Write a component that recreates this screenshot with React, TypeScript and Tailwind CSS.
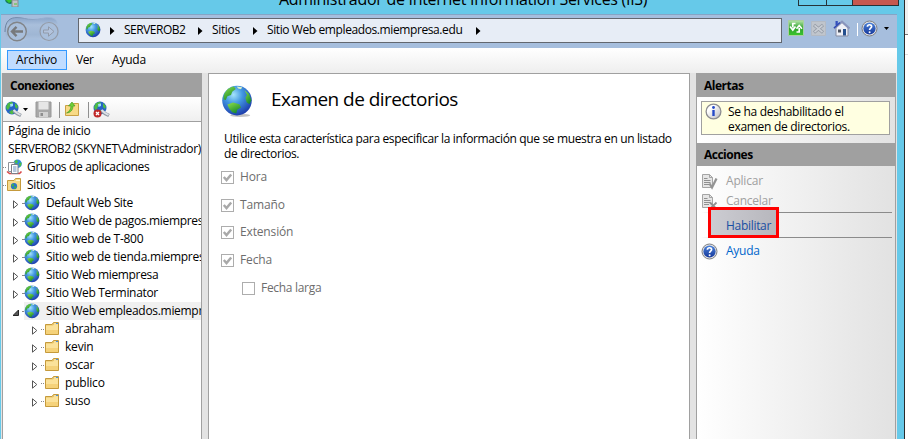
import React from "react";

const Globe = ({ size = 16, shadow = false }: { size?: number; shadow?: boolean }) => (
  <svg width={size} height={size} viewBox="0 0 16 16" className="shrink-0">
    <defs>
      <radialGradient id="sea" cx="0.38" cy="0.3" r="0.75">
        <stop offset="0" stopColor="#a5e4fb" />
        <stop offset="0.4" stopColor="#4398e2" />
        <stop offset="1" stopColor="#1a37a8" />
      </radialGradient>
      <linearGradient id="land" x1="0" y1="0" x2="0.6" y2="1">
        <stop offset="0" stopColor="#8fe04a" />
        <stop offset="1" stopColor="#178a2c" />
      </linearGradient>
    </defs>
    {shadow && <ellipse cx="9.6" cy="15.2" rx="5" ry="0.8" fill="#999" opacity="0.6" />}
    <circle cx="8" cy="7.8" r="7.4" fill="url(#sea)" />
    <path d="M1.3 7.2C1 3.8 3.6 1.2 6.4.8L7.4 2 5.6 3.4 5 5 3.2 5.6 2.4 7.5Z" fill="url(#land)" />
    <path d="M3.2 9.8 6 8.8 9.2 9.6 10 11.2 8.2 12.2 7.6 14.2 5.6 13.6 4 11.6Z" fill="url(#land)" />
    <path d="M11.8 2.6 14 4.4 15.2 7.6 14.2 9.6 12.8 8.6 12.2 6.4 13 5Z" fill="url(#land)" />
    <path d="M7.8.7 10.6 1.1 10 2.1 8.6 1.8Z" fill="#d9f2c8" />
  </svg>
);

const Folder = () => (
  <svg width="16" height="16" viewBox="0 0 16 16" className="shrink-0">
    <path d="M1.5 3.5H8L9.5 1.5H14.5V13.5H1.5Z" fill="#e9c566" stroke="#c59a3c" />
    <path d="M10 3H14" stroke="#fff7d0" />
    <path d="M12 2.5h2" stroke="#4a90d9" />
    <path d="M2 4.5H8.8L10 3.8H14V13H2Z" fill="#fbe29a" />
    <path d="M2 9H14V13H2Z" fill="#f5d27a" />
  </svg>
);

const SitesFolder = () => (
  <svg width="16" height="16" viewBox="0 0 16 16" className="shrink-0">
    <path d="M1.5 3.5H8L9.5 1.5H14.5V13.5H1.5Z" fill="#f5d98a" stroke="#c59a3c" />
    <path d="M10 3.5H14" stroke="#fff7d0" />
    <circle cx="8" cy="9.2" r="3.1" fill="#2b75c8" />
    <path d="M5.5 8 7.5 6.5 8 8.5 6.5 9.8ZM8 10 10 9 10.3 11 8.5 12Z" fill="#43b53b" />
  </svg>
);

const AppPools = () => (
  <svg width="17" height="16" viewBox="0 0 17 16" className="shrink-0">
    <circle cx="11.5" cy="4.8" r="4.3" fill="#2f8ae0" />
    <path d="M8.5 2 11 .8 12 3 10 5ZM13 4 15.6 3.6 15 7 13.5 7.5Z" fill="#4cc043" />
    <path d="M1 12.5 3.5 14.5H13.5L15.5 12.5" fill="none" stroke="#d94848" strokeWidth="1.6" />
    <path d="M2.5 3.5h6v9h-6z" fill="#fff" stroke="#8d9299" />
    <path d="M5.5 5.5h6.5v9H5.5z" fill="#fff" stroke="#7b8088" />
    <path d="M7 8h3.5M7 10h3.5M7 12h3.5" stroke="#6c90bc" />
  </svg>
);

const HelpIcon = () => (
  <svg width="17" height="17" viewBox="0 0 17 17" className="shrink-0">
    <defs>
      <linearGradient id="help" x1="0" y1="0" x2="0" y2="1">
        <stop offset="0" stopColor="#4c83da" />
        <stop offset="1" stopColor="#15379a" />
      </linearGradient>
    </defs>
    <circle cx="8.5" cy="8.5" r="7.5" fill="#e2e2e2" stroke="#7e8085" />
    <circle cx="8.5" cy="8.5" r="6.1" fill="url(#help)" />
    <path d="M6.4 6.7C6.5 4 10.8 4.2 10.6 6.7 10.4 8.2 8.6 8.2 8.6 10" fill="none" stroke="#fff" strokeWidth="1.7" />
    <circle cx="8.6" cy="12.2" r="1" fill="#fff" />
  </svg>
);

const InfoIcon = () => (
  <svg width="17" height="17" viewBox="0 0 17 17" className="shrink-0">
    <defs>
      <linearGradient id="info" x1="0" y1="0" x2="1" y2="1">
        <stop offset="0.3" stopColor="#fff" />
        <stop offset="1" stopColor="#b7b7bd" />
      </linearGradient>
    </defs>
    <circle cx="8.5" cy="8.5" r="7.4" fill="url(#info)" stroke="#8c8c90" strokeWidth="1.3" />
    <path d="M8.5 7v6" stroke="#2449c8" strokeWidth="2.4" />
    <circle cx="8.5" cy="4.5" r="1.4" fill="#2449c8" />
  </svg>
);

const PageIcon = ({ mark }: { mark: "check" | "cross" }) => (
  <svg width="17" height="17" viewBox="0 0 17 17" className="shrink-0">
    <path d="M1.5 1.5H8.5L11.5 4.5V14.5H1.5Z" fill="#e6e6e6" stroke="#a5a5a5" />
    <path d="M8.5 1.5V4.5H11.5" fill="none" stroke="#a5a5a5" />
    <path d="M3 5.5H6.5M3 7.5H9.5M3 9.5H9.5M3 11.5H8" stroke="#909090" />
    {mark === "check" ? (
      <path d="M8.5 10.5 11 14.5 15.5 5.5" fill="none" stroke="#949494" strokeWidth="2.3" />
    ) : (
      <path d="M9 9.5 15.5 16M15.5 9.5 9 16" fill="none" stroke="#909090" strokeWidth="1.8" />
    )}
  </svg>
);

const NavButtons = () => (
  <svg width="58" height="30" viewBox="0 0 58 30" className="shrink-0">
    <defs>
      <linearGradient id="nav" x1="0" y1="0" x2="0" y2="1">
        <stop offset="0" stopColor="#8aa5c9" />
        <stop offset="0.3" stopColor="#a9bfdb" />
        <stop offset="0.7" stopColor="#9fb6d4" />
        <stop offset="1" stopColor="#b0c6e2" />
      </linearGradient>
      <linearGradient id="rim" x1="0" y1="0" x2="1" y2="0">
        <stop offset="0" stopColor="#6a819f" />
        <stop offset="0.5" stopColor="#8aa3c4" />
        <stop offset="1" stopColor="#a6bedd" />
      </linearGradient>
    </defs>
    <path d="M1 14C1 5 6 1.5 13 1.5 19 1.5 22 3.5 29 3.5S40 1.5 45 1.5C52 1.5 55 6 55 14S51 25 44 25C37 25 36 22.5 29 22.5S20 26 13 26 1 23 1 14Z" fill="url(#nav)" />
    <path d="M1 16C1 5 6 1.5 13 1.5 19 1.5 22 3.5 29 3.5S40 1.5 45 1.5C52 1.5 55 6 55 14" fill="none" stroke="url(#rim)" />
    <circle cx="13" cy="15.5" r="9.3" fill="#a9bfdb" stroke="#818488" strokeWidth="1.4" />
    <path d="M19 15.5H9M12.5 10.8 8 15.5 12.5 20.2" fill="none" stroke="#77797c" strokeWidth="2.4" />
    <circle cx="45" cy="15.5" r="9" fill="#a9bfdb" stroke="#949ba7" strokeWidth="1.2" />
    <path d="M39.5 14H44.5V10.8L50 15.5 44.5 20.2V17H39.5Z" fill="#b2c3dc" stroke="#929baa" />
  </svg>
);

const CrumbArrow = ({ className }: { className: string }) => (
  <svg width="5" height="8" viewBox="0 0 5 8" className={`shrink-0 ${className}`}>
    <path d="M0 0 4.5 4 0 8Z" fill="#000" />
  </svg>
);

const DownArrow = () => (
  <svg width="5" height="3" viewBox="0 0 5 3" className="shrink-0">
    <path d="M0 0H5L2.5 3Z" fill="#000" />
  </svg>
);

const ConnectIcon = ({ removed = false }: { removed?: boolean }) => (
  <svg width="17" height="17" viewBox="0 0 17 17" className="shrink-0">
    <circle cx="7" cy="7" r="6.5" fill="#2764c6" />
    <path d="M1 6 3 2 7 .7 8 3 5 5 4 8 2 9ZM4 11 7 9 9 10 8 13 6 13ZM10 2 13 5 12 8 10 6Z" fill="#4dbb43" />
    <path d="M5 3 8 2.5 8 5 5.5 6Z" fill="#9cdff5" />
    <path d="M8.5 9.5 12 12.5 16 14.5" fill="none" stroke="#929aa4" strokeWidth="3.4" />
    <path d="M8.5 9 12 12 15.5 14" fill="none" stroke="#dde2e8" strokeWidth="1.8" />
    {removed && (
      <>
        <circle cx="4.5" cy="12.5" r="4" fill="#c02828" />
        <path d="M3 11 6 14M6 11 3 14" stroke="#fff" strokeWidth="1.4" />
      </>
    )}
  </svg>
);

const SaveIcon = () => (
  <svg width="17" height="17" viewBox="0 0 17 17" className="shrink-0">
    <path d="M1 1H16V16H1Z" fill="#a8a8a8" stroke="#989898" />
    <path d="M3.5 1H13.5V8.5H3.5Z" fill="#e6e6e6" />
    <path d="M4 11H13V16H4Z" fill="#d2d2d2" />
    <path d="M5.5 12H8V15H5.5Z" fill="#8e8e8e" />
  </svg>
);

const UpFolder = () => (
  <svg width="16" height="16" viewBox="0 0 16 16" className="shrink-0">
    <path d="M1.5 4.5H8L9.5 2.5H14.5V14.5H1.5Z" fill="#f8da86" stroke="#c9a045" />
    <path d="M2.5 12C5.5 10.5 6.8 8 7 5H4.5L8 1 11 5H9C9 9 6.5 11.8 2.5 12Z" fill="#6fce36" stroke="#3e9420" strokeWidth="0.6" />
  </svg>
);

const Separator = () => <div className="mt-px h-4 w-px bg-[#8f8f8f]" />;

const RefreshIcon = () => (
  <svg width="16" height="16" viewBox="0 0 16 16" className="shrink-0">
    <defs>
      <linearGradient id="refresh" x1="0" y1="0" x2="0" y2="1">
        <stop offset="0" stopColor="#b6e4a9" />
        <stop offset="0.5" stopColor="#2fa32c" />
        <stop offset="1" stopColor="#3ac52c" />
      </linearGradient>
    </defs>
    <path d="M.5.5H15.5V15.5H.5Z" fill="url(#refresh)" stroke="#a8cf9f" />
    <path d="M7.5 3.5H4.8V7.5M2 6.5 4.8 10 7.5 6.5M8.5 12H11.2V8M8.5 8.8 11.2 5.5 14 8.8" fill="none" stroke="#fff" strokeWidth="1.7" />
  </svg>
);

const StopIcon = () => (
  <svg width="15" height="15" viewBox="0 0 15 15" className="shrink-0">
    <path d="M.5.5H14.5V14.5H.5Z" fill="#c0c5cc" stroke="#b4bac3" />
    <path d="M3 4 12 11.5M12 4 3 11.5" stroke="#959ca6" strokeWidth="3.2" />
    <path d="M3.5 4.4 11.5 11.1M11.5 4.4 3.5 11.1" stroke="#c9ced5" strokeWidth="1.8" />
  </svg>
);

const HomeIcon = () => (
  <svg width="17" height="17" viewBox="0 0 17 17" className="shrink-0">
    <path d="M3 8 9 2.5 15 8V16H3Z" fill="#eef0f7" stroke="#858ba0" />
    <path d="M2.5 1H4.8V5H2.5Z" fill="#3450bd" />
    <path d="M1 8.5 9 1.5 16.5 8.5" fill="none" stroke="#8995bd" strokeWidth="2" />
    <path d="M1 8 7 2.5" stroke="#2c46b4" strokeWidth="1.5" />
    <path d="M10 9H13V15.5H10Z" fill="#244f8e" />
    <path d="M5 9.5H8V12.5H5Z" fill="#4b5260" />
  </svg>
);

const Expander = ({ open = false }: { open?: boolean }) => (
  <svg width="6" height="9" viewBox="0 0 6 9" className="shrink-0">
    {open ? (
      <path d="M5.5 2V7.5H0Z" fill="#595959" stroke="#262626" />
    ) : (
      <path d="M.5.8 4.8 4.5.5 8.2Z" fill="#fff" stroke="#555" />
    )}
  </svg>
);

const Dots = ({ className = "w-[3px]" }: { className?: string }) => (
  <div className={`shrink-0 border-t border-dotted border-[#888] ${className}`} />
);

const sites: { name: string; track: string; open?: boolean }[] = [
  { name: "Default Web Site", track: "tracking-[-0.38px]" },
  { name: "Sitio Web de pagos.miempresa.edu", track: "tracking-[-0.33px]" },
  { name: "Sitio web de T-800", track: "tracking-[-0.26px]" },
  { name: "Sitio web de tienda.miempresa.edu", track: "tracking-[-0.28px]" },
  { name: "Sitio Web miempresa", track: "tracking-[-0.35px]" },
  { name: "Sitio Web Terminator", track: "tracking-[-0.32px]" },
  { name: "Sitio Web empleados.miempresa.edu", track: "tracking-[-0.3px]", open: true },
];

const folders = ["abraham", "kevin", "oscar", "publico", "suso"];

const options = [
  { label: "Hora", row: "mt-0" },
  { label: "Tamaño", row: "mt-[10px]" },
  { label: "Extensión", row: "mt-[9px]" },
  { label: "Fecha", row: "mt-[10px]" },
];

const CheckBox = ({ checked }: { checked: boolean }) => (
  <span className="flex h-[13px] w-[13px] items-center justify-center border border-[#adadad] bg-white">
    {checked && (
      <svg width="11" height="11" viewBox="0 0 11 11">
        <path d="M1.8 5 4.5 8 9.2 2.5" fill="none" stroke="#a9a9a9" strokeWidth="2.5" />
      </svg>
    )}
  </span>
);

const PaneHeader = ({ children, className }: { children: React.ReactNode; className: string }) => (
  <div className={`flex shrink-0 items-start bg-[#a0a0a0] pl-[7px] leading-[18px] font-bold ${className}`}>
    {children}
  </div>
);

export default function App() {
  return (
    <div className="flex h-[439px] w-[908px] overflow-hidden bg-[#66c9e9] font-['Open_Sans','Noto_Sans',sans-serif] text-[12px] tracking-[-0.3px] text-black">
      <div className="flex h-full w-[904px] shrink-0 flex-col">
        {/* Title bar */}
        <div className="flex h-[14px] shrink-0 items-start overflow-hidden">
          <svg width="16" height="7" viewBox="0 0 16 7" className="ml-[5px]">
            <circle cx="5" cy="-1" r="5" fill="#187d5a" />
            <path d="M1 0 4 3 7 1 6 -1Z" fill="#35c52c" />
            <path d="M7 0H13V7H7Z" fill="#bfc4c8" stroke="#858a8d" />
            <path d="M9 4h3" stroke="#54c43b" />
          </svg>
          <div className="mt-[-12px] ml-[258px] h-[22px] w-[368px] text-[16px] leading-[22px] tracking-[-0.29px] whitespace-nowrap">
            Administrador de Internet Information Services (IIS)
          </div>
          <div className="ml-[151px] flex h-[6px] w-[101px] border-x border-b border-[#263238]">
            <div className="w-[28px] border-r border-[#263238]" />
            <div className="w-[26px] border-r border-[#263238]" />
            <div className="flex-1 bg-[#c75850]" />
          </div>
        </div>
        <div className="ml-px flex min-h-0 w-[896px] flex-1 flex-col">
          {/* Navigation bar */}
          <div className="flex h-[34px] shrink-0 items-start border-t border-[#84a5c6] bg-[#a6bedd]">
            <div className="mt-px ml-[3px]">
              <NavButtons />
            </div>
            <div className="mt-[3px] ml-[16px] flex h-[25px] w-[704px] items-center border border-[#62676f] bg-[#e7edf6] leading-[18px] whitespace-nowrap">
              <div className="mt-[-1px] ml-[6px] flex">
                <Globe size={16} />
              </div>
              <CrumbArrow className="ml-[9px]" />
              <div className="mt-[-1px] ml-[9px] w-[74px] tracking-[-0.5px]">SERVEROB2</div>
              <CrumbArrow className="" />
              <div className="mt-[-1px] ml-[9px] w-[41px] tracking-[-0.35px]">Sitios</div>
              <CrumbArrow className="" />
              <div className="mt-[-1px] ml-[9px] w-[209px] tracking-[-0.4px]">Sitio Web empleados.miempresa.edu</div>
              <CrumbArrow className="" />
            </div>
            <div className="mt-[4px] ml-[6px] flex h-[18px] items-center">
              <RefreshIcon />
              <div className="ml-[7px]">
                <StopIcon />
              </div>
              <div className="ml-[7px]">
                <HomeIcon />
              </div>
              <div className="mt-[3px] ml-[7px] h-[13px] w-px bg-white" />
              <div className="ml-[3px]">
                <HelpIcon />
              </div>
              <div className="ml-[6px]">
                <DownArrow />
              </div>
            </div>
          </div>
          {/* Menu bar */}
          <div className="flex h-[25px] shrink-0 items-start bg-linear-to-b from-white to-[#eeeeee] pt-[2px] pl-[6px] leading-[18px]">
            <div className="h-[20px] w-[60px] border border-[#3399ff] bg-[#c0dcff] pl-[8px] tracking-[-0.1px]">Archivo</div>
            <div className="mt-px ml-[9px] w-[36px] tracking-[-0.5px]">Ver</div>
            <div className="mt-px tracking-[-0.2px]">Ayuda</div>
          </div>
          {/* Work area */}
          <div className="flex min-h-0 flex-1 bg-[#e3e3e3]">
            <div className="ml-px flex w-[200px] flex-col border-x border-[#a0a0a0] bg-white">
              <PaneHeader className="h-[24px] pt-[4px] tracking-[-0.5px]">Conexiones</PaneHeader>
              <div className="flex h-[25px] shrink-0 items-center border-b border-[#a0a0a0] bg-linear-to-b from-white to-[#efefef] pl-[2px]">
                <ConnectIcon />
                <div className="ml-px">
                  <DownArrow />
                </div>
                <div className="ml-[7px]">
                  <SaveIcon />
                </div>
                <div className="ml-[7px]">
                  <Separator />
                </div>
                <div className="ml-[4px]">
                  <UpFolder />
                </div>
                <div className="ml-[8px]">
                  <Separator />
                </div>
                <div className="ml-[4px]">
                  <ConnectIcon removed />
                </div>
              </div>
              <div className="flex min-h-0 flex-1 flex-col overflow-hidden leading-[18px] whitespace-nowrap">
                <div className="h-[18px] pl-[5px]">Página de inicio</div>
                <div className="h-[18px] pl-[5px] tracking-[-0.34px]">SERVEROB2 (SKYNET\Administrador)</div>
                <div className="flex h-[18px] items-center">
                  <Dots />
                  <AppPools />
                  <span className="ml-[4px] tracking-[-0.34px]">Grupos de aplicaciones</span>
                </div>
                <div className="flex h-[18px] items-center">
                  <Dots />
                  <SitesFolder />
                  <span className="ml-[5px]">Sitios</span>
                </div>
                {sites.map((s) => (
                  <div key={s.name} className="flex h-[18px] shrink-0 items-center pl-[10px]">
                    <div className="mt-[3px] flex">
                      <Expander open={s.open} />
                    </div>
                    <Dots className="ml-[3px] w-[2px]" />
                    <div className={`flex h-[18px] flex-1 items-center ${s.open ? "bg-[#f0f0f0]" : ""}`}>
                      <Globe size={16} />
                      <span className={`ml-[6px] ${s.track}`}>{s.name}</span>
                    </div>
                  </div>
                ))}
                {folders.map((f) => (
                  <div key={f} className="flex h-[18px] shrink-0 items-center pl-[29px]">
                    <div className="mt-[3px] flex">
                      <Expander />
                    </div>
                    <Dots className="ml-[3px] w-[3px]" />
                    <div className="flex items-center gap-[5px] tracking-[-0.2px]">
                      <Folder />
                      {f}
                    </div>
                  </div>
                ))}
              </div>
            </div>

            {/* Feature page */}
            <div className="ml-[6px] flex w-[482px] flex-col border-x border-t border-[#a0a0a0] bg-white pl-[12px]">
              <div className="mt-[11px] flex h-[32px] items-center">
                <Globe size={32} shadow />
                <h1 className="mt-[-5px] ml-[18px] text-[19px] leading-[26px] tracking-[-0.55px]">Examen de directorios</h1>
              </div>
              <div className="mt-[14px] ml-[3px] leading-[15px] tracking-[-0.355px] whitespace-nowrap">
                Utilice esta característica para especificar la información que se muestra en un listado
                <br />
                de directorios.
              </div>
              <div className="mt-[7px] flex flex-col text-[#6d6d6d]">
                {options.map((o) => (
                  <label key={o.label} className={`flex h-[18px] items-center gap-[6px] tracking-[-0.15px] ${o.row}`}>
                    <CheckBox checked />
                    {o.label}
                  </label>
                ))}
                <label className="mt-[10px] ml-[21px] flex h-[18px] items-center gap-[6px] tracking-[-0.3px]">
                  <CheckBox checked={false} />
                  Fecha larga
                </label>
              </div>
            </div>

            {/* Alerts and actions */}
            <div className="ml-[6px] flex w-[200px] flex-col border-x border-[#a0a0a0] bg-white">
              <PaneHeader className="h-[24px] pt-[4px] tracking-[-0.5px]">Alertas</PaneHeader>
              <div className="h-[46px] shrink-0 bg-linear-to-r from-white to-[#e2e2e2] pt-[4px] pl-[4px]">
                <div className="flex h-[34px] w-[189px] border border-[#a0a0a0] bg-[#ffffe1] pt-px pl-[3px] leading-[15px]">
                  <InfoIcon />
                  <div className="mt-px ml-[6px] tracking-[-0.3px] whitespace-nowrap">
                    Se ha deshabilitado el
                    <br />
                    examen de directorios.
                  </div>
                </div>
              </div>
              <PaneHeader className="h-[23px] pt-[3px] tracking-[-0.5px]">Acciones</PaneHeader>
              <div className="flex-1 bg-linear-to-r from-white to-[#e2e2e2] pt-[5px] pl-[4px] text-[#a0a0a0]">
                <div className="flex h-[20px] items-center">
                  <PageIcon mark="check" />
                  <span className="ml-[8px] tracking-[-0.2px]">Aplicar</span>
                </div>
                <div className="flex h-[20px] items-center">
                  <PageIcon mark="cross" />
                  <span className="ml-[8px] tracking-[-0.25px]">Cancelar</span>
                </div>
                <div className="relative mt-px h-[26px] w-[191px]">
                  <div className="h-px bg-linear-to-r from-transparent via-[#8b8b8b] via-30% to-[#8b8b8b]" />
                  <div className="h-[24px]" />
                  <div className="h-px bg-linear-to-r from-transparent via-[#8b8b8b] via-30% to-[#8b8b8b]" />
                  {/* Highlight frame drawn over the action list */}
                  <div className="absolute top-[-5px] left-[7px] flex h-[31px] w-[71px] items-center border-3 border-[#ff0000] bg-linear-to-r from-[#ccccd2] to-[#b7b7bd] pt-[6px] pl-[15px] tracking-[-0.3px] text-[#1a4fa3]">
                    Habilitar
                  </div>
                </div>
                <div className="mt-[2px] flex h-[22px] items-center text-[#0066cc]">
                  <HelpIcon />
                  <span className="ml-[8px] tracking-[-0.25px]">Ayuda</span>
                </div>
              </div>
            </div>
          </div>
        </div>
      </div>
      {/* Edge of the window behind */}
      <div className="w-px bg-[#2b2b2b]" />
      <div className="w-[3px] bg-white">
        <div className="h-[35px] border-b border-[#777] bg-[#f0f0f0]" />
        <div className="h-[20px] border-b border-[#ddd]" />
      </div>
    </div>
  );
}
